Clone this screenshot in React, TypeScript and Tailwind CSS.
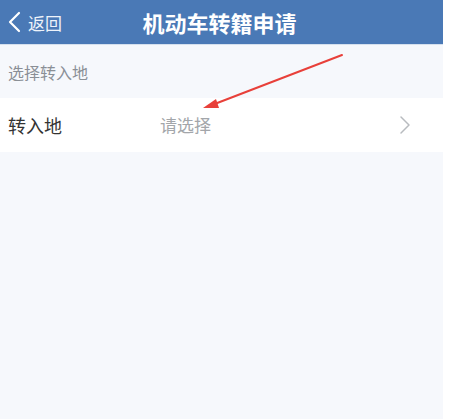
import React from 'react';

const cjk = '"Noto Sans CJK SC", "Noto Sans", sans-serif';

export default function App() {
  return (
    <div className="w-[450px] h-[419px] bg-white" style={{ fontFamily: cjk }}>
      <div className="relative w-[443px] h-[419px] bg-[#f6f8fc] flex flex-col">
        {/* Header */}
        <div className="relative h-[45px] bg-[#4a79b6] flex items-center border-b border-[#d5e0ee]">
          <div className="flex items-center pl-[7px] text-white">
            <svg width="15" height="22" viewBox="0 0 15 22" fill="none">
              <path d="M12 2 L3 11 L12 20" stroke="white" strokeWidth="2.2" strokeLinecap="round" strokeLinejoin="round" />
            </svg>
            <span className="ml-[6px] text-[17px] leading-none text-[#eef3fa]">返回</span>
          </div>
          <div className="absolute inset-0 flex items-center justify-center pointer-events-none">
            <span className="text-[22px] font-bold text-white -ml-[4px]">机动车转籍申请</span>
          </div>
        </div>

        {/* Section label */}
        <div className="h-[53px] flex items-center px-[8px]">
          <span className="text-[16px] text-[#8a8f96]">选择转入地</span>
        </div>

        {/* Row */}
        <div className="h-[54px] bg-white flex items-center px-[8px]">
          <span className="w-[152px] text-[18px] text-[#333]">转入地</span>
          <span className="flex-1 text-[17px] text-[#a3a6aa]">请选择</span>
          <svg width="12" height="20" viewBox="0 0 12 20" fill="none" className="mr-[24px]">
            <path d="M2 2 L10 10 L2 18" stroke="#b8bbbf" strokeWidth="1.5" strokeLinecap="round" strokeLinejoin="round" />
          </svg>
        </div>

        {/* Red annotation arrow */}
        <svg className="absolute left-0 top-0" width="443" height="419" viewBox="0 0 443 419" fill="none">
          <line x1="342" y1="55" x2="212" y2="105" stroke="#e8403a" strokeWidth="2" strokeLinecap="round" />
          <polygon points="203,108 216,99 219,108" fill="#e8403a" />
        </svg>
      </div>
    </div>
  );
}
